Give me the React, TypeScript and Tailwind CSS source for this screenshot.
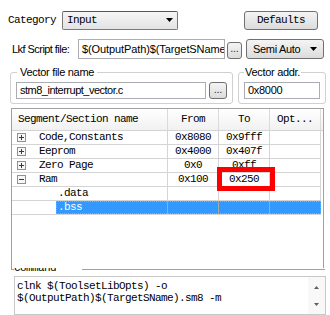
import React from 'react';

const MONO = "font-['Liberation_Mono','DejaVu_Sans_Mono',monospace] text-[11px] tracking-[-0.6px]";
const SANS = "font-['Liberation_Sans',Arial,sans-serif] text-[11px] tracking-[-0.3px]";

const segments = [
  { name: 'Code,Constants', from: '0x8080', to: '0x9fff', kind: 'closed' },
  { name: 'Eeprom', from: '0x4000', to: '0x407f', kind: 'closed' },
  { name: 'Zero Page', from: '0x0', to: '0xff', kind: 'closed' },
  { name: 'Ram', from: '0x100', to: '0x250', kind: 'open' },
  { name: '.data', from: '', to: '', kind: 'child' },
];

function ExpandBox({ open }: { open: boolean }) {
  return (
    <svg width="9" height="9" viewBox="0 0 9 9" className="shrink-0">
      <rect x="0.5" y="0.5" width="8" height="8" fill="#f7f7f7" stroke="#919191" />
      <path d="M2 4.5h5" stroke="#1f3a7a" />
      {!open && <path d="M4.5 2v5" stroke="#1f3a7a" />}
    </svg>
  );
}

function DownArrow() {
  return (
    <svg width="7" height="4" viewBox="0 0 7 4" className="shrink-0">
      <path d="M0 0h7L3.5 4z" fill="#000" />
    </svg>
  );
}

function DotsButton({ className = '' }: { className?: string }) {
  return (
    <div
      className={`flex items-end justify-center pb-[1px] rounded-[3px] border border-[#707070] bg-linear-to-b from-[#f4f4f4] to-[#dcdcdc] text-[#333] ${SANS} ${className}`}
    >
      ...
    </div>
  );
}

export default function App() {
  return (
    <div className="w-[330px] h-[315px] bg-white overflow-hidden pt-[10px] text-black">
      {/* Category / Defaults */}
      <div className="flex items-center h-[20px] pl-[8px]">
        <span className={`w-[54px] ${MONO}`}>Category</span>
        <div className="w-[116px] h-[19px] flex items-center justify-between pl-[4px] pr-[4px] rounded-[2px] border border-[#7a7a7a] border-t-[#555] bg-linear-to-b from-[#f6f6f6] to-[#e2e2e2]">
          <span className={MONO}>Input</span>
          <DownArrow />
        </div>
        <div
          className={`ml-[66px] w-[74px] h-[19px] flex items-center justify-center rounded-[3px] border border-[#707070] bg-linear-to-b from-[#f4f4f4] to-[#dcdcdc] ${MONO}`}
        >
          Defaults
        </div>
      </div>

      {/* Lkf script */}
      <div className="flex items-center h-[20px] mt-[9px] pl-[12px]">
        <span className="w-[66px] whitespace-nowrap font-['Liberation_Sans',Arial,sans-serif] text-[11px] tracking-[-0.55px]">
          Lkf Script file:
        </span>
        <div className="w-[147px] h-[20px] flex items-center pl-[3px] border border-[#abadb3] bg-white overflow-hidden whitespace-nowrap font-['Liberation_Sans',Arial,sans-serif] text-[11px] tracking-[-0.1px]">
          $(OutputPath)$(TargetSName).lkf
        </div>
        <DotsButton className="ml-[2px] w-[15px] h-[17px] mt-[2px]" />
        <div className="ml-[4px] w-[78px] h-[20px] flex items-center justify-between pl-[6px] pr-[6px] rounded-[3px] border border-[#707070] bg-linear-to-b from-[#f4f4f4] to-[#dcdcdc]">
          <span className={SANS}>Semi Auto</span>
          <DownArrow />
        </div>
      </div>

      {/* Vector groups */}
      <div className="flex mt-[7px] pl-[10px]">
        <fieldset className="w-[223px] border border-[#d0d0d0] rounded-[3px] px-[5px] pb-[4px]">
          <legend className={`ml-[1px] px-[3px] leading-[13px] ${SANS}`}>Vector file name</legend>
          <div className="flex items-center mt-[3px]">
            <div className="w-[190px] h-[17px] flex items-center pl-[3px] border border-[#abadb3] overflow-hidden whitespace-nowrap font-['Liberation_Sans',Arial,sans-serif] text-[11px] tracking-[-0.5px]">
              stm8_interrupt_vector.c
            </div>
            <DotsButton className="ml-[3px] w-[18px] h-[17px]" />
          </div>
        </fieldset>
        <fieldset className="ml-[5px] w-[88px] border border-[#d0d0d0] rounded-[3px] px-[5px] pb-[4px]">
          <legend className={`px-[1px] leading-[13px] ${SANS}`}>Vector addr.</legend>
          <div className={`mt-[3px] w-[76px] h-[17px] flex items-center pl-[3px] border border-[#abadb3] ${SANS}`}>
            0x8000
          </div>
        </fieldset>
      </div>

      {/* Segment table */}
      <div className={`relative mt-[4px] ml-[11px] w-[313px] h-[160px] border-l border-t border-r border-[#a0a0a0] ${MONO}`}>
        <div className="flex h-[22px] w-[311px] border-b border-[#d4d4d4] bg-linear-to-b from-white to-[#f1f1f1]">
          <div className="w-[156px] h-full flex items-center pl-[6px] border-r border-[#dadada]">Segment/Section name</div>
          <div className="w-[51px] h-full flex items-center justify-center border-r border-[#dadada]">From</div>
          <div className="w-[51px] h-full flex items-center justify-center border-r border-[#dadada]">To</div>
          <div className="w-[51px] h-full flex items-center justify-center border-r border-[#dadada]">Opt...</div>
        </div>

        {segments.map((s) => (
          <div key={s.name} className="flex h-[14px] w-[309px] border-b border-[#d4d4d4]">
            <div className="w-[156px] h-full flex items-center pl-[5px] border-r border-[#d4d4d4]">
              {s.kind === 'child' ? (
                <span className="ml-[41px]">{s.name}</span>
              ) : (
                <>
                  <ExpandBox open={s.kind === 'open'} />
                  <span className="ml-[13px]">{s.name}</span>
                </>
              )}
            </div>
            <div className="w-[51px] h-full flex items-center justify-center border-r border-[#d4d4d4]">{s.from}</div>
            <div className="w-[51px] h-full flex items-center justify-center border-r border-[#d4d4d4]">{s.to}</div>
            <div className="w-[51px] h-full border-r border-[#d4d4d4]" />
          </div>
        ))}

        {/* selected .bss row */}
        <div className="flex h-[14px] w-[309px] border-b border-[#d4d4d4]">
          <div className="w-[44px] h-full" />
          <div className="flex h-full bg-[#3399ff] text-white outline-1 outline-dotted outline-[#e89a3c] -outline-offset-1">
            <div className="w-[112px] h-full flex items-center pl-[2px] border-r border-[#a8a8a8]">.bss</div>
            <div className="w-[51px] h-full border-r border-[#a8a8a8]" />
            <div className="w-[51px] h-full border-r border-[#a8a8a8]" />
            <div className="w-[51px] h-full" />
          </div>
        </div>

        {/* red highlight */}
        <div className="absolute left-[205px] top-[58px] w-[58px] h-[24px] border-[5px] border-[#ff0000]" />
      </div>

      {/* Command label */}
      <div className="flex items-start h-[7px] ml-[11px] w-[314px]">
        <div className="w-[3px] h-[2px] border-l border-b border-[#a0a0a0]" />
        <div className="h-[6px] overflow-hidden">
          <span className={`block -mt-[6px] leading-[12px] ${MONO}`}>Command</span>
        </div>
        <div className="w-[26px]" />
        <div className="flex-1 h-px mt-[1px] bg-[#a0a0a0]" />
      </div>

      {/* Command text */}
      <div className="flex ml-[14px] mt-[1px] w-[312px] h-[39px] border border-[#c8c8c8] bg-white">
        <div className={`flex-1 pl-[2px] pt-[3px] leading-[12px] whitespace-pre ${MONO}`}>
          {'clnk $(ToolsetLibOpts) -o\n$(OutputPath)$(TargetSName).sm8 -m'}
        </div>
        <div className="w-[17px] h-full flex flex-col items-center bg-[#f8f8f8]">
          <div className="h-[17px] mt-[2px] flex items-center">
            <svg width="5" height="3" viewBox="0 0 5 3">
              <path d="M0 3h5L2.5 0z" fill="#606060" />
            </svg>
          </div>
          <div className="h-[17px] flex items-center">
            <svg width="5" height="3" viewBox="0 0 5 3">
              <path d="M0 0h5L2.5 3z" fill="#606060" />
            </svg>
          </div>
        </div>
      </div>
    </div>
  );
}
